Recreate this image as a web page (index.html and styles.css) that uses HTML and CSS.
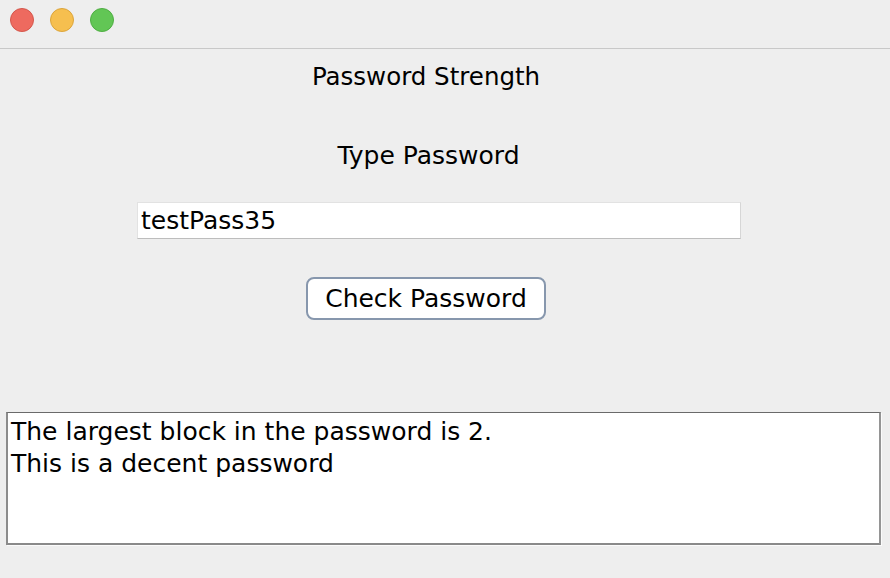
FILE: index.html
```html
<!DOCTYPE html>
<html>
<head>
<meta charset="utf-8">
<link rel="stylesheet" href="styles.css">
</head>
<body>
<div class="window">
  <div class="titlebar">
    <span class="light red"></span>
    <span class="light yellow"></span>
    <span class="light green"></span>
  </div>
  <div class="content">
    <div class="heading">Password Strength</div>
    <div class="label">Type Password</div>
    <div class="field">testPass35</div>
    <button class="check">Check Password</button>
  </div>
  <div class="output">The largest block in the password is 2.<br>This is a decent password</div>
</div>
</body>
</html>
```
FILE: styles.css
```css
html, body {
  margin: 0;
  padding: 0;
  background: #eeeeee;
  font-family: "DejaVu Sans", "Liberation Sans", sans-serif;
  color: #000;
}
.window {
  width: 890px;
  height: 578px;
  display: flex;
  flex-direction: column;
}
.titlebar {
  height: 49px;
  border-bottom: 1px solid #c8c8c8;
  box-sizing: border-box;
  display: flex;
  align-items: flex-start;
  padding: 8px 0 0 10px;
  gap: 16px;
}
.light {
  width: 24px;
  height: 24px;
  border-radius: 50%;
  box-sizing: border-box;
}
.red { background: #ee6a5f; border: 1px solid #d4574c; }
.yellow { background: #f6bf4f; border: 1px solid #dca53b; }
.green { background: #62c655; border: 1px solid #4fae43; }
.content {
  width: 852px;
  display: flex;
  flex-direction: column;
  align-items: center;
}
.heading {
  font-size: 24.5px;
  line-height: 30px;
  margin-top: 13px;
}
.label {
  font-size: 25px;
  line-height: 30px;
  margin-top: 49px;
  margin-left: 5px;
}
.field {
  align-self: flex-start;
  margin-left: 137px;
  margin-top: 31px;
  width: 604px;
  height: 37px;
  box-sizing: border-box;
  background: #fff;
  border-top: 1px solid #e2e2e2;
  border-left: 1px solid #e2e2e2;
  border-right: 1px solid #d6d6d6;
  border-bottom: 1px solid #bdbdbd;
  font-size: 25px;
  line-height: 35px;
  padding-left: 3px;
}
.check {
  margin-top: 38px;
  width: 240px;
  height: 43px;
  box-sizing: border-box;
  background: #fff;
  border: 2px solid #8797ad;
  border-radius: 8px;
  font-family: "DejaVu Sans", "Liberation Sans", sans-serif;
  font-size: 25px;
  line-height: 39px;
  color: #000;
  padding: 0;
}
.output {
  margin-left: 6px;
  margin-top: 92px;
  width: 875px;
  height: 133px;
  box-sizing: border-box;
  background: #fff;
  border-top: 1px solid #6a6a6a;
  border-left: 2px solid #8c8c8c;
  border-right: 2px solid #959595;
  border-bottom: 2px solid #8a8a8a;
  box-shadow: 1px 1px 0 #fbfbfb;
  font-size: 25px;
  line-height: 32px;
  padding: 3px 0 0 3px;
}
```
